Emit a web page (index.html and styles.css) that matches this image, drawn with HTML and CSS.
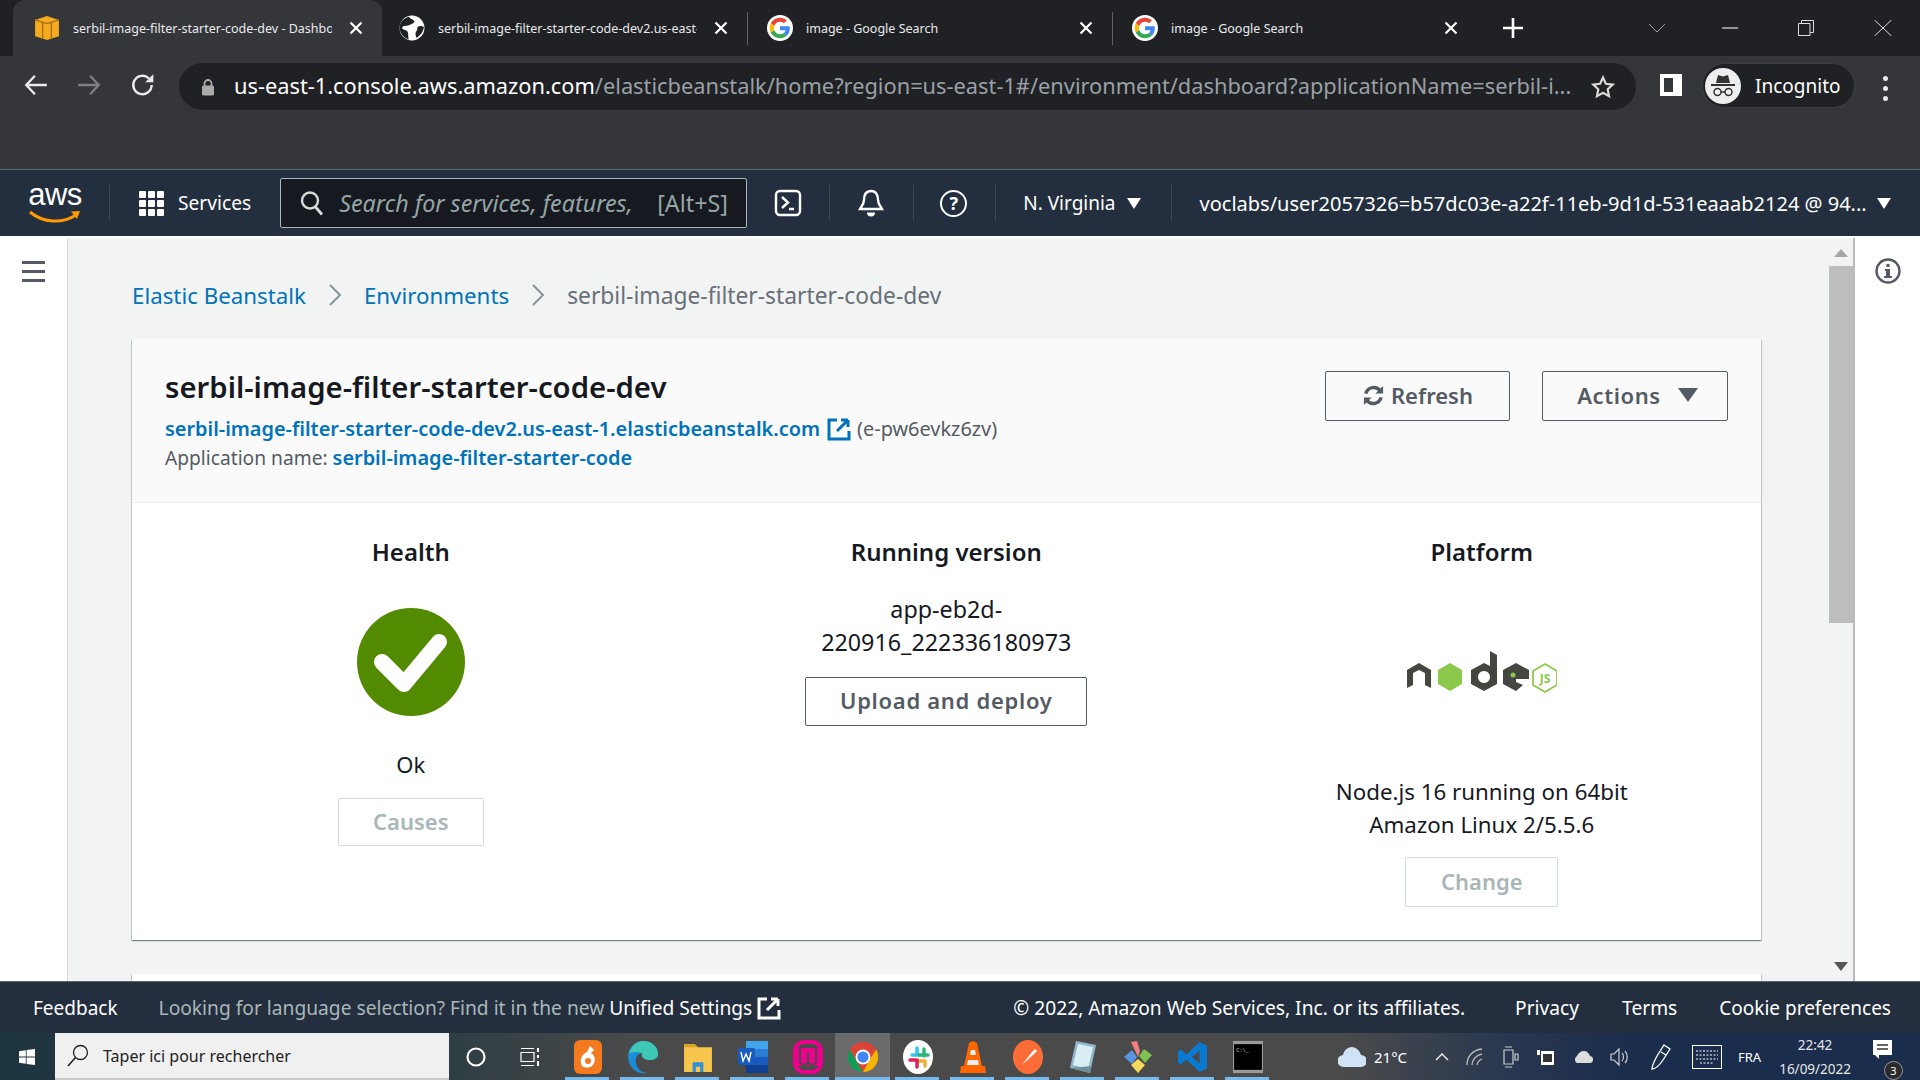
FILE: index.html
```html
<!DOCTYPE html>
<html lang="en">
<head>
<meta charset="utf-8">
<title>Elastic Beanstalk</title>
<link rel="stylesheet" href="styles.css">
</head>
<body>
<svg class="defs" width="0" height="0">
  <symbol id="g-logo" viewBox="0 0 48 48">
    <circle cx="24" cy="24" r="24" fill="#fff"/>
    <g transform="translate(5 5) scale(.79)">
    <path fill="#EA4335" d="M24 9.5c3.54 0 6.71 1.22 9.21 3.6l6.85-6.85C35.9 2.38 30.47 0 24 0 14.62 0 6.51 5.38 2.56 13.22l7.98 6.19C12.43 13.72 17.74 9.5 24 9.5z"/>
    <path fill="#4285F4" d="M46.98 24.55c0-1.57-.15-3.09-.38-4.55H24v9.02h12.94c-.58 2.96-2.26 5.48-4.78 7.18l7.73 6c4.51-4.18 7.09-10.36 7.09-17.65z"/>
    <path fill="#FBBC05" d="M10.53 28.59c-.48-1.45-.76-2.99-.76-4.59s.27-3.14.76-4.59l-7.98-6.19C.92 16.46 0 20.12 0 24c0 3.88.92 7.54 2.56 10.78l7.97-6.19z"/>
    <path fill="#34A853" d="M24 48c6.48 0 11.93-2.13 15.89-5.81l-7.73-6c-2.15 1.45-4.92 2.3-8.16 2.3-6.26 0-11.57-4.22-13.47-9.91l-7.98 6.19C6.51 42.62 14.62 48 24 48z"/>
    </g>
  </symbol>
  <symbol id="x-close" viewBox="0 0 16 16"><path d="M2.5 2.5l11 11M13.5 2.5l-11 11" stroke="#fff" stroke-width="2.2" fill="none"/></symbol>
  <symbol id="ext-link" viewBox="0 0 24 24"><path d="M10 3H2v19h20v-8M21 3h-7M21 3v7M21 3L10 14" fill="none" stroke="currentColor" stroke-width="3"/></symbol>
</svg>

<div class="tabstrip">
  <div class="tab active">
    <svg class="fav" viewBox="0 0 24 24"><path d="M1 4.500L12 1l11 3.500v15L12 23 1 19.500z" fill="#f4ab1f"/><path d="M1 4.500L12 8l11-3.500M8 7v15M16 7v15" stroke="#a86c10" stroke-width="1.200" fill="none"/></svg>
    <span class="tab-title">serbil-image-filter-starter-code-dev - Dashboard</span>
    <svg class="tab-x"><use href="#x-close"/></svg>
  </div>
  <div class="tab">
    <svg class="fav" viewBox="0 0 24 24"><circle cx="12" cy="12" r="11.500" fill="#fff"/><path d="M9 1.500c1 2 4 2 5 4s-3 3-5 4-5 0-6 2 4 2 5 4 0 4 1 7c-4-1-8-5-8.500-10S4 3 9 1.500zM17 11c2-1 4-1 6 0-.5 4-3 8-7 10-1-3-1-5 0-6s1-3 1-4z" fill="#202124"/></svg>
    <span class="tab-title">serbil-image-filter-starter-code-dev2.us-east-1.elasticbeanstalk.com</span>
    <svg class="tab-x"><use href="#x-close"/></svg>
  </div>
  <div class="tab sep">
    <svg class="fav"><use href="#g-logo"/></svg>
    <span class="tab-title">image - Google Search</span>
    <svg class="tab-x"><use href="#x-close"/></svg>
  </div>
  <div class="tab sep">
    <svg class="fav"><use href="#g-logo"/></svg>
    <span class="tab-title">image - Google Search</span>
    <svg class="tab-x"><use href="#x-close"/></svg>
  </div>
  <div class="newtab">
    <svg viewBox="0 0 20 20" width="20" height="20"><path d="M10 0v20M0 10h20" stroke="#fff" stroke-width="2.600"/></svg>
  </div>
  <div class="winctl">
    <svg class="wc-chev" viewBox="0 0 18 10" width="18" height="10"><path d="M1 1l8 8 8-8" fill="none" stroke="#9aa0a6" stroke-width="1"/></svg>
    <svg class="wc-min" viewBox="0 0 16 2" width="16" height="2"><path d="M0 1h16" stroke="#ddd" stroke-width="1.200"/></svg>
    <svg class="wc-res" viewBox="0 0 16 16" width="16" height="16"><path d="M.5 3.500h11.500v12H.5zM3.500 3.500V.5h12v12H12" fill="none" stroke="#ddd" stroke-width="1"/></svg>
    <svg class="wc-close" viewBox="0 0 18 16" width="18" height="16"><path d="M.5 0l17 16M17.500 0L.5 16" stroke="#ddd" stroke-width="1"/></svg>
  </div>
</div>

<div class="toolbar">
  <svg class="nav-ic back" viewBox="0 0 24 24"><path d="M22 12H3M11 3.500L3 12l8 8.500" fill="none" stroke="#e8eaed" stroke-width="2.200"/></svg>
  <svg class="nav-ic fwd" viewBox="0 0 24 24"><path d="M2 12h19M13 3.500l8 8.500-8 8.500" fill="none" stroke="#7c7f83" stroke-width="2.200"/></svg>
  <svg class="nav-ic reload" viewBox="0 0 24 24"><path d="M20 12a8.500 8.500 0 1 1-2.500-6" fill="none" stroke="#e8eaed" stroke-width="2.200"/><path d="M21.500 2v7.500H14z" fill="#e8eaed"/></svg>
  <div class="urlbar">
    <svg class="lock" viewBox="0 0 14 18" width="14" height="18"><path d="M3.500 8V5.500a3.500 3.500 0 0 1 7 0V8" fill="none" stroke="#aaa" stroke-width="1.800"/><rect x="1" y="7.500" width="12" height="10" rx="1.500" fill="#aaa"/></svg>
    <div class="url"><span class="url-host">us-east-1.console.aws.amazon.com</span>/elasticbeanstalk/home?region=us-east-1#/environment/dashboard?applicationName=serbil-i...</div>
    <svg class="star" viewBox="0 0 24 24" width="24" height="24"><path d="M12 2.500l2.900 6.300 6.800.8-5 4.700 1.300 6.800-6-3.400-6 3.400 1.300-6.800-5-4.700 6.800-.8z" fill="none" stroke="#d8d8d8" stroke-width="2.200"/></svg>
  </div>
  <svg class="panel-ic" viewBox="0 0 24 24" width="24" height="24"><path d="M1 1h22v22H1z" fill="#fff"/><path d="M5 5h9v14H5z" fill="#35363a"/></svg>
  <div class="incog">
    <svg class="incog-av" viewBox="0 0 36 36" width="36" height="36"><circle cx="18" cy="18" r="18" fill="#eee"/><path d="M11 15l2-8 5 1.500L23 7l2 8zM6 16h24v2H6z" fill="#333"/><circle cx="12.500" cy="24" r="3.500" fill="none" stroke="#333" stroke-width="1.500"/><circle cx="23.500" cy="24" r="3.500" fill="none" stroke="#333" stroke-width="1.500"/><path d="M16 24h4" stroke="#333" stroke-width="1.500"/></svg>
    <span>Incognito</span>
  </div>
  <div class="kebab"><i></i><i></i><i></i></div>
</div>

<header class="awsnav">
  <div class="aws-logo">
    <span class="aws-word">aws</span>
    <svg viewBox="0 0 52 15" width="52" height="15"><path d="M1 2c13 11 32 12 46 3" fill="none" stroke="#f90" stroke-width="3"/><path d="M42 1.500l9 -.5-3 8z" fill="#f90"/></svg>
  </div>
  <div class="nav-div first"></div>
  <div class="services">
    <div class="grid-ic"><i></i><i></i><i></i><i></i><i></i><i></i><i></i><i></i><i></i></div>
    <span class="svc-label">Services</span>
  </div>
  <div class="search">
    <svg viewBox="0 0 24 26" width="24" height="26"><circle cx="10" cy="10.500" r="8" fill="none" stroke="#d5dbdb" stroke-width="2.400"/><path d="M15.500 17l6.500 7.500" stroke="#d5dbdb" stroke-width="2.800"/></svg>
    <em>Search for services, features,</em>
    <b>[Alt+S]</b>
  </div>
  <svg class="term" viewBox="0 0 28 28" width="28" height="28"><rect x="2" y="2" width="24" height="24" rx="4" fill="none" stroke="#fff" stroke-width="2.400"/><path d="M8 8l6 5.500-6 5.500M15 20h5" fill="none" stroke="#fff" stroke-width="2.400"/></svg>
  <div class="nav-div d2"></div>
  <svg class="bell" viewBox="0 0 28 30" width="28" height="30"><path d="M14 3c-5 0-7 4-7 9 0 4-3 7-4 9h22c-1-2-4-5-4-9 0-5-2-9-7-9z" fill="none" stroke="#fff" stroke-width="2.400"/><path d="M10 24.500a4 4 0 0 0 8 0z" fill="#fff"/></svg>
  <div class="nav-div d3"></div>
  <div class="help">?</div>
  <div class="nav-div d4"></div>
  <span class="region">N. Virginia</span><span class="caret c1"></span>
  <div class="nav-div d5"></div>
  <span class="account">voclabs/user2057326=b57dc03e-a22f-11eb-9d1d-531eaaab2124 @ 94...</span><span class="caret c2"></span>
</header>
<div class="navline"></div>

<div class="workspace">
  <aside class="leftrail">
    <div class="burger"><i></i><i></i><i></i></div>
  </aside>
  <main class="panel">
    <nav class="crumbs">
      <a>Elastic Beanstalk</a>
      <svg viewBox="0 0 14 24" width="14" height="24"><path d="M2 2l10 10L2 22" fill="none" stroke="#879596" stroke-width="2"/></svg>
      <a>Environments</a>
      <svg viewBox="0 0 14 24" width="14" height="24"><path d="M2 2l10 10L2 22" fill="none" stroke="#879596" stroke-width="2"/></svg>
      <span>serbil-image-filter-starter-code-dev</span>
    </nav>
    <section class="card">
      <div class="card-head">
        <div class="head-text">
          <h1>serbil-image-filter-starter-code-dev</h1>
          <p class="line1"><a>serbil-image-filter-starter-code-dev2.us-east-1.elasticbeanstalk.com</a><svg class="ext"><use href="#ext-link"/></svg><span>(e-pw6evkz6zv)</span></p>
          <p class="line2">Application name: <a>serbil-image-filter-starter-code</a></p>
        </div>
        <div class="head-btns">
          <button class="btn refresh"><svg viewBox="0 0 24 24" width="23" height="23"><path d="M4 10a8.500 8.500 0 0 1 15-3M20 14a8.500 8.500 0 0 1-15 3" fill="none" stroke="currentColor" stroke-width="3.600"/><path d="M22 2v8h-8zM2 22v-8h8z" fill="currentColor"/></svg>Refresh</button>
          <button class="btn actions">Actions<span class="btn-caret"></span></button>
        </div>
      </div>
      <div class="card-body">
        <div class="col">
          <h2>Health</h2>
          <svg class="ok-ic" viewBox="0 0 108 108" width="108" height="108"><circle cx="54" cy="54" r="54" fill="#538b00"/><path d="M25 54l22 22 35-42" fill="none" stroke="#fff" stroke-width="16" stroke-linejoin="round" stroke-linecap="round"/></svg>
          <p class="ok-text">Ok</p>
          <button class="btn disabled causes">Causes</button>
        </div>
        <div class="col">
          <h2>Running version</h2>
          <p class="version">app-eb2d-<br>220916_222336180973</p>
          <button class="btn upload">Upload and deploy</button>
        </div>
        <div class="col">
          <h2>Platform</h2>
          <svg class="node-logo" viewBox="0 0 150 43" width="150" height="43">
            <path d="M0 37V19l12-7 12 7v18l-6-3V22l-6-3-6 3v12z" fill="#45463f"/>
            <path d="M43 12l12 7v14l-12 7-12-7V19z" fill="#8cc84b"/>
            <path d="M83 0l7 4v29l-13 7-13-7V19l13-7 6 3zM77 20a6 6 0 1 0 .01 0z" fill="#45463f" fill-rule="evenodd"/>
            <path d="M109 12l13 7v9l-13 0v3l7 3-7 6-13-7V19z" fill="#45463f"/>
            <circle cx="106" cy="24" r="2.500" fill="#8cc84b"/>
            <path d="M138 13l12 7v14l-12 7-12-7V20z" fill="none" stroke="#8cc84b" stroke-width="1.800"/>
            <text x="138" y="32" text-anchor="middle" class="js">JS</text>
          </svg>
          <p class="platform">Node.js 16 running on 64bit<br>Amazon Linux 2/5.5.6</p>
          <button class="btn disabled change">Change</button>
        </div>
      </div>
    </section>
    <section class="card second"></section>
  </main>
  <div class="scrollbar">
    <span class="arrow up"></span>
    <div class="thumb"></div>
    <span class="arrow down"></span>
  </div>
  <aside class="rightrail">
    <svg viewBox="0 0 26 26" width="26" height="26"><circle cx="13" cy="13" r="11.500" fill="none" stroke="#545b64" stroke-width="2.400"/><circle cx="13" cy="7.500" r="1.800" fill="#545b64"/><path d="M10 11h5v7h2v2H9v-2h2v-5h-1z" fill="#545b64"/></svg>
  </aside>
</div>

<footer class="awsfoot">
  <span class="fb">Feedback</span>
  <span class="lang">Looking for language selection? Find it in the new <b>Unified Settings</b></span>
  <svg class="fext"><use href="#ext-link"/></svg>
  <span class="copy">© 2022, Amazon Web Services, Inc. or its affiliates.</span>
  <span class="flink privacy">Privacy</span>
  <span class="flink terms">Terms</span>
  <span class="flink cookie">Cookie preferences</span>
</footer>

<div class="taskbar">
  <svg class="win" viewBox="0 0 16 16" width="16" height="16"><path d="M0 2.200l6.800-1v6.400H0zM7.600 1.100L16 0v7.600H7.600zM0 8.400h6.800v6.400l-6.800-1zM7.600 8.400H16V16l-8.400-1.100z" fill="#fff"/></svg>
  <div class="tb-search">
    <svg viewBox="0 0 22 24" width="22" height="24"><circle cx="13.500" cy="8.500" r="7" fill="none" stroke="#222" stroke-width="1.300"/><path d="M8.500 13.500L1 22" stroke="#222" stroke-width="1.600"/></svg>
    <span>Taper ici pour rechercher</span>
  </div>
  <svg class="cortana" viewBox="0 0 20 20" width="20" height="20"><circle cx="10" cy="10" r="8.500" fill="none" stroke="#fff" stroke-width="2.200"/></svg>
  <svg class="taskview" viewBox="0 0 22 20" width="22" height="20"><path d="M1 1.500h13M1 18.500h13M1 5.500h13v9H1z" fill="none" stroke="#fff" stroke-width="1.200"/><path d="M18 1v4M18 8v3M18 14v5" stroke="#fff" stroke-width="2"/></svg>
  <div class="apps">
    <div class="app on"><svg viewBox="0 0 28 34"><rect width="28" height="34" rx="6" fill="#f47a20"/><path d="M8 26c-3-6 0-12 5-14l3-6 4 4-3 3c5 3 5 9 1 13-3 2-7 2-10 0z" fill="#fff"/><circle cx="14" cy="21" r="3" fill="#f47a20"/></svg></div>
    <div class="app on"><svg viewBox="0 0 30 34"><path d="M15 1c9 0 15 6 15 13 0 4-4 6-8 6-6 0-9-3-8-7-5 1-7 5-6 10 1 6 6 10 12 10C8 35 0 27 0 16 0 8 7 1 15 1z" fill="#1b8dd6"/><path d="M1 14C3 6 9 1 15 1c9 0 15 6 15 13 0 4-4 6-8 6-6 0-9-3-8-7C8 11 3 12 1 14z" fill="#3ec8b4"/></svg></div>
    <div class="app on"><svg viewBox="0 0 28 30"><path d="M1 3h10l3 3h13v23H1z" fill="#f7c64d"/><path d="M1 3h10l3 3H1z" fill="#d9a32c"/><path d="M9 20h10v9h-3v-5h-4v5H9z" fill="#2f8fd8"/></svg></div>
    <div class="app on"><svg viewBox="0 0 30 34"><path d="M8 1h22v32H8z" fill="#2b7cd3"/><path d="M8 1h22v8H8z" fill="#41a5ee"/><path d="M8 17h22v8H8z" fill="#185abd"/><path d="M8 25h22v8H8z" fill="#103f91"/><rect y="8" width="17" height="17" rx="2" fill="#185abd"/><path d="M3 12l2 9 3-7 3 7 2-9" fill="none" stroke="#fff" stroke-width="1.400"/></svg></div>
    <div class="app on"><svg viewBox="0 0 30 34"><rect x="2" y="2" width="26" height="30" rx="9" fill="none" stroke="#ec008c" stroke-width="4"/><path d="M4 8h22v18H4z" fill="#ec008c"/><path d="M7 8v12c0 3 2 5 4 5 1.500 0 3-1 4-3 1 2 2.500 3 4 3 2 0 4-2 4-5V8" fill="none" stroke="#4a4a4a" stroke-width="2"/><path d="M15 12v10" stroke="#4a4a4a" stroke-width="2"/></svg></div>
    <div class="app sel"><svg viewBox="0 0 32 32"><circle cx="16" cy="16" r="16" fill="#db4437"/><path d="M16 32A16 16 0 0 1 2 8l8 14 z" fill="#0f9d58"/><path d="M30 8A16 16 0 0 1 16 32l7-13z" fill="#f4b400"/><circle cx="16" cy="16" r="8" fill="#fff"/><circle cx="16" cy="16" r="6" fill="#4285f4"/></svg></div>
    <div class="app on"><svg viewBox="0 0 30 34"><ellipse cx="15" cy="17" rx="15" ry="17" fill="#fff"/><path d="M9 15h7M14 8v7" stroke="#36c5f0" stroke-width="3.500" stroke-linecap="round"/><path d="M21 9v7M16 15h9" stroke="#2eb67d" stroke-width="3.500" stroke-linecap="round"/><path d="M14 21h8M22 21v5" stroke="#ecb22e" stroke-width="3.500" stroke-linecap="round"/><path d="M14 20v7M7 20h7" stroke="#e01e5a" stroke-width="3.500" stroke-linecap="round"/></svg></div>
    <div class="app on"><svg viewBox="0 0 26 34"><path d="M13 1l4 2 5 23H4L9 3z" fill="#f60"/><path d="M11 10h4l1 5H10zM8 20h10l1 5H7z" fill="#eee"/><path d="M1 26h24l1 7H0z" fill="#f60"/></svg></div>
    <div class="app on"><svg viewBox="0 0 30 34"><ellipse cx="15" cy="17" rx="15" ry="17" fill="#ff6c37"/><path d="M9 25l10-13 3-3 2 2-3 3z" fill="#fff"/></svg></div>
    <div class="app on"><svg viewBox="0 0 26 34"><path d="M6 1l20 4-6 28L0 28z" fill="#8fb8c8"/><path d="M8 4l15 3-5 22L3 25z" fill="#d8eef2"/><path d="M0 28l20 5 2-7z" fill="#6f8f9b"/></svg></div>
    <div class="app on"><svg viewBox="0 0 30 34"><path d="M15 17L8 2l6-1 3 10z" fill="#f27e7e"/><path d="M1 17l8-7 5 7-5 7z" fill="#5a93e0"/><path d="M29 15l-8-6-5 7 6 7z" fill="#7ec24f"/><path d="M8 25l7-6 7 6-7 8z" fill="#f4d95a"/></svg></div>
    <div class="app on"><svg viewBox="0 0 32 34"><path d="M23 1l8 4v24l-8 4-14-13-6 5-3-2V11l3-2 6 5zM23 10l-8 7 8 7z" fill="#0a7ad1"/></svg></div>
    <div class="app on"><svg viewBox="0 0 28 30"><rect width="28" height="30" fill="#9a9a9a"/><rect x="1" y="3" width="26" height="24" fill="#000"/><text x="3" y="10" class="cmdtxt">C:\_</text></svg></div>
  </div>
  <div class="tray">
    <svg class="t-cloud" viewBox="0 0 28 22" width="28" height="22"><path d="M6 21a6 6 0 0 1-1-12c1-5 5-8 9-8s8 4 9 8a6 6 0 0 1 0 12z" fill="#cfe3f5"/></svg>
    <span class="t-temp">21°C</span>
    <svg class="t-a" viewBox="0 0 14 8" width="14" height="8"><path d="M1 7l6-6 6 6" fill="none" stroke="#fff" stroke-width="1.300"/></svg>
    <svg class="t-b" viewBox="0 0 18 18" width="18" height="18"><path d="M1 17c0-9 6-15 15-16M6 17c0-5 4-10 10-11M11 17c0-2 2-5 5-6" fill="none" stroke="#bbb" stroke-width="1.300"/></svg>
    <svg class="t-b" viewBox="0 0 18 22" width="18" height="22"><path d="M3 4h9v14H3zM4 1h7M4 21h7M14 8h3v6h-3z" fill="none" stroke="#ccc" stroke-width="1.200"/></svg>
    <svg class="t-b" viewBox="0 0 20 18" width="20" height="18"><path d="M5 3h13v14H5z" fill="#fff"/><path d="M7 6h9v8H7z" fill="#333"/><path d="M1 2h3v5H1z" fill="#fff"/></svg>
    <svg class="t-b" viewBox="0 0 20 14" width="20" height="14"><path d="M4 13a4 4 0 0 1 0-7c1-3 4-5 7-5s5 2 6 5a3.500 3.500 0 0 1-1 7z" fill="#ddd"/></svg>
    <svg class="t-b" viewBox="0 0 20 20" width="20" height="20"><path d="M1 7h3l5-5v16l-5-5H1zM12 6c2 2 2 6 0 8M15 4c3 3 3 9 0 12" fill="none" stroke="#ccc" stroke-width="1.200"/></svg>
    <svg class="t-pen" viewBox="0 0 22 26" width="22" height="26"><path d="M14 1l6 4-7 11c-2 3-7 9-11 9 0-4 3-9 5-13zM11 8l5 3" fill="none" stroke="#fff" stroke-width="1.300"/></svg>
    <svg class="t-key" viewBox="0 0 30 24" width="30" height="24"><rect x=".5" y=".5" width="29" height="23" fill="none" stroke="#fff"/><path d="M4 6h22M4 10h22M4 14h22M8 18h14" stroke="#fff" stroke-dasharray="2 1.500"/></svg>
    <span class="t-lang">FRA</span>
    <div class="t-clock"><span>22:42</span><span>16/09/2022</span></div>
    <div class="t-notif">
      <svg viewBox="0 0 20 22" width="20" height="22"><path d="M0 0h19v15H6v4l-4-4H0z" fill="#fff"/><path d="M4 5h11M4 9h11" stroke="#333" stroke-width="1.400"/></svg>
      <span class="badge">3</span>
    </div>
  </div>
</div>
</body>
</html>
```
FILE: styles.css
```css
* { box-sizing: border-box; }
html, body { margin: 0; height: 100%; }
body { width: 1920px; height: 1080px; overflow: hidden; font-family: "Noto Sans", "Open Sans", sans-serif; color: #16191f; background: #fff; }
.defs { position: absolute; }
p, h1, h2 { margin: 0; }

/* browser chrome */
.tabstrip { height: 56px; background: #202124; display: flex; align-items: center; padding-left: 13px; color: #e8eaed; }
.tab { width: 365px; height: 56px; display: flex; align-items: center; padding-left: 17px; position: relative; flex: none; }
.tab.active { width: 369px; background: #35363a; border-radius: 12px 12px 0 0; padding-left: 21px; }
.tab.sep::before { content: ""; position: absolute; left: 0; top: 12px; height: 33px; width: 1px; background: #5f6368; }
.tab.sep { width: 365px; padding-left: 20px; }
.tab.sep:last-of-type { border-right: 1px solid #5f6368; }
.fav { width: 26px; height: 26px; flex: none; }
.tab-title { margin-left: 13px; width: 259px; overflow: hidden; white-space: nowrap; font-size: 12.500px; flex: none; color: #e8eaed; }
.tab-x { width: 16px; height: 16px; flex: none; position: absolute; right: 18px; top: 20px; }
.newtab { margin-left: 26px; display: flex; }
.winctl { margin-left: auto; display: flex; align-items: center; height: 46px; position: relative; width: 300px; }
.wc-chev { margin-left: 28px; }
.wc-min { margin-left: 56px; }
.wc-res { margin-left: 60px; }
.wc-close { margin-left: 60px; }

.toolbar { height: 113px; background: #35363a; display: flex; align-items: flex-start; padding-top: 7px; }
.nav-ic { width: 26px; height: 26px; flex: none; margin-top: 9px; }
.back { margin-left: 23px; }
.fwd { margin-left: 27px; }
.reload { margin-left: 28px; }
.urlbar { margin-left: 23px; width: 1457px; height: 47px; border-radius: 24px; background: #202124; display: flex; align-items: center; padding-left: 22px; }
.lock { flex: none; }
.url { margin-left: 19px; font-size: 21.800px; color: #9aa0a6; white-space: nowrap; width: 1342px; overflow: hidden; line-height: 44px; padding-bottom: 2px; }
.url-host { color: #fff; }
.star { margin-left: 15px; flex: none; }
.panel-ic { margin: 10px 0 0 23px; flex: none; }
.incog { margin-left: 19px; width: 153px; height: 45px; border-radius: 23px; background: #202124; border: 1px solid #3c3d40; display: flex; align-items: center; padding-left: 2px; color: #fff; font-size: 19px; gap: 14px; }
.kebab { margin: 13px 0 0 28px; display: flex; flex-direction: column; gap: 5px; }
.kebab i { width: 5px; height: 5px; border-radius: 50%; background: #e8eaed; display: block; }

/* aws nav */
.awsnav { height: 67px; background: #232f3e; border-top: 1px solid #5d6670; display: flex; align-items: center; color: #fff; font-size: 19.200px; }
.aws-logo { margin-left: 29px; width: 52px; display: flex; flex-direction: column; align-items: center; height: 46px; }
.aws-word { font: 400 31px/30px "Liberation Sans", sans-serif; height: 30px; letter-spacing: -.5px; }
.nav-div { width: 1px; height: 36px; background: #414750; flex: none; }
.first { margin-left: 28px; }
.services { margin-left: 29px; display: flex; align-items: center; gap: 14px; }
.svc-label { padding-bottom: 2px; }
.grid-ic { display: grid; grid-template-columns: repeat(3, 7px); gap: 2px; }
.grid-ic i { width: 7px; height: 7px; background: #fff; border-radius: 1px; }
.search { margin-left: 29px; width: 467px; height: 50px; background: #16191f; border: 1px solid #aab7b8; border-radius: 2px; display: flex; align-items: center; padding-left: 19px; color: #95a5a6; font-size: 23.300px; }
.search svg { flex: none; }
.search em { margin-left: 15px; width: 318px; white-space: nowrap; overflow: hidden; }
.search b { font-weight: 400; }
.term { margin-left: 27px; }
.d2 { margin-left: 27px; }
.bell { margin-left: 27px; }
.d3 { margin-left: 28px; }
.help { margin-left: 26px; width: 27px; height: 27px; border: 2.500px solid #fff; border-radius: 50%; font-size: 18px; font-weight: 700; display: flex; align-items: center; justify-content: center; line-height: 1; }
.d4 { margin-left: 28px; }
.region { margin-left: 27px; white-space: nowrap; font-size: 19px; }
.caret { width: 0; height: 0; border-left: 7px solid transparent; border-right: 7px solid transparent; border-top: 11px solid #fff; margin-left: 11px; }
.d5 { margin-left: 30px; }
.account { margin-left: 28px; white-space: nowrap; font-size: 20px; }
.c2 { margin-left: 10px; }
.navline { height: 2px; background: #fff; }

/* workspace */
.workspace { height: 743px; display: flex; overflow: hidden; }
.leftrail { width: 68px; flex: none; background: #fff; border-right: 1px solid #d5dbdb; padding: 23px 0 0 22px; }
.burger { width: 23px; display: flex; flex-direction: column; gap: 6px; }
.burger i { height: 3px; background: #545b64; display: block; }
.panel { width: 1761px; flex: none; background: #f2f3f3; padding: 0 68px 0 64px; overflow: hidden; }
.crumbs { height: 101px; display: flex; align-items: center; font-size: 22.800px; color: #687078; gap: 22px; padding-top: 13px; }
.crumbs a { color: #0073bb; font-size: 22.300px; }
.card { width: 1629px; background: #fff; box-shadow: 0 1px 1px 0 rgba(0,28,36,.3), 1px 1px 1px 0 rgba(0,28,36,.15), -1px 1px 1px 0 rgba(0,28,36,.15); }
.card-head { height: 164px; background: #fafafa; border-bottom: 1px solid #eaeded; display: flex; justify-content: space-between; padding: 31px 33px 0; }
.head-btns { padding-top: 1px; }
h1 { font-size: 29.300px; font-weight: 600; line-height: 34px; }
.line1 { font-size: 19.900px; line-height: 30px; color: #545b64; margin-top: 10px; display: flex; align-items: center; }
.line1 a { font-weight: 600; color: #0073bb; }
.ext { width: 24px; height: 24px; margin: 0 6px 0 7px; color: #0073bb; }
.line2 { font-size: 19.200px; line-height: 28px; color: #545b64; }
.line2 a { font-size: 19.900px; font-weight: 600; color: #0073bb; }
.head-btns { display: flex; gap: 32px; align-items: flex-start; }
.btn { font-family: inherit; background: #fff; border: 1px solid #545b64; border-radius: 2px; color: #545b64; font-size: 22px; font-weight: 600; display: flex; align-items: center; justify-content: center; height: 50px; padding: 0 0 2px; }
.head-btns .btn { background: transparent; }
.refresh { width: 185px; gap: 6px; }
.actions { width: 186px; gap: 17px; letter-spacing: .6px; padding-left: 5px; }
.btn-caret { width: 0; height: 0; border-left: 10px solid transparent; border-right: 10px solid transparent; border-top: 14px solid #545b64; }
.card-body { height: 437px; display: grid; grid-template-columns: repeat(3, 535.500px); padding: 32px 0 0 11px; }
.col { display: flex; flex-direction: column; align-items: center; text-align: center; font-size: 22px; }
h2 { font-size: 24px; font-weight: 600; line-height: 34px; }
.ok-ic { margin-top: 39px; }
.ok-text { margin-top: 32px; line-height: 33px; }
.disabled { border-color: #d5dbdb; color: #aab7b8; }
.causes { width: 146px; height: 48px; margin-top: 17px; }
.version { margin-top: 24px; line-height: 33px; font-size: 23.300px; }
.upload { width: 282px; height: 49px; margin-top: 18px; letter-spacing: .7px; padding-bottom: 3px; }
.node-logo { margin-top: 82px; }
.js { font: 700 12px "Noto Sans", sans-serif; fill: #8cc84b; }
.platform { margin-top: 81px; line-height: 33px; font-size: 22.300px; }
.change { width: 153px; height: 50px; margin-top: 16px; }
.second { height: 60px; margin-top: 34px; }

.scrollbar { width: 26px; flex: none; background: #f2f3f3; position: relative; border-right: 2px solid #bbb; padding-top: 28px; }
.thumb { width: 24px; height: 357px; background: #bdbdbd; }
.arrow { position: absolute; left: 5px; width: 0; height: 0; border-left: 7px solid transparent; border-right: 7px solid transparent; }
.arrow.up { top: 11px; border-bottom: 8px solid #a6a6a6; }
.arrow.down { top: 724px; border-top: 9px solid #555; }
.rightrail { flex: 1; background: #fff; padding: 20px 0 0 20px; }

/* aws footer */
.awsfoot { height: 52px; background: #232f3e; border-top: 1px solid #5d6670; display: flex; align-items: center; color: #fff; font-size: 19.200px; white-space: nowrap; }
.fb { margin-left: 33px; font-size: 19px; }
.lang { margin-left: 41px; color: #aab7b8; }
.lang b { color: #fff; font-weight: 400; }
.fext { width: 24px; height: 24px; margin-left: 5px; color: #fff; }
.copy { margin-left: 232px; }
.flink { margin-left: 50px; }
.terms { margin-left: 43px; }
.cookie { margin-left: 42px; font-size: 19px; }

/* windows taskbar */
.taskbar { height: 47px; background: linear-gradient(90deg, #1d3540 0%, #2a3c42 22%, #4a4a4a 33%, #4a4a4a 60%, #4a4a4a 70%, #2a3850 78%, #1b2d4c 85%, #1b2d4c 100%); display: flex; align-items: center; color: #fff; }
.win { margin-left: 19px; flex: none; }
.tb-search { margin-left: 20px; width: 394px; height: 47px; background: #f0f0f0; border-bottom: 2px solid #c9c9c9; display: flex; align-items: center; padding-left: 12px; color: #222; font-size: 16px; gap: 14px; }
.cortana { margin-left: 17px; flex: none; }
.taskview { margin-left: 34px; flex: none; }
.apps { margin-left: 18px; display: flex; height: 47px; }
.app { width: 55px; height: 47px; display: flex; align-items: center; justify-content: center; position: relative; flex: none; }
.app svg { width: 30px; height: 34px; }
.app.on::after, .app.sel::after { content: ""; position: absolute; bottom: 0; left: 5px; right: 6px; height: 3px; background: #76b9ed; }
.app.sel { background: #6b6b6b; }
.app.sel::after { left: 0; right: 0; }
.cmdtxt { font: 5px "Liberation Mono", monospace; fill: #ccc; }
.tray { margin-left: auto; display: flex; align-items: center; height: 47px; padding-right: 23px; font-size: 14px; }
.t-temp { margin-left: 8px; font-size: 15px; }
.t-a { margin-left: 28px; }
.t-b { margin-left: 17px; }
.t-pen { margin-left: 20px; }
.t-key { margin-left: 20px; }
.t-lang { margin-left: 16px; font-size: 13px; }
.t-clock { margin-left: 18px; display: flex; flex-direction: column; align-items: center; font-size: 13.500px; line-height: 24px; color: #e6e6e6; }
.t-notif { margin-left: 22px; position: relative; width: 24px; height: 34px; }
.badge { position: absolute; right: -6px; bottom: -6px; width: 19px; height: 19px; border-radius: 50%; background: #2b2b2b; border: 1px solid #999; font-size: 11px; line-height: 17px; text-align: center; }
```
